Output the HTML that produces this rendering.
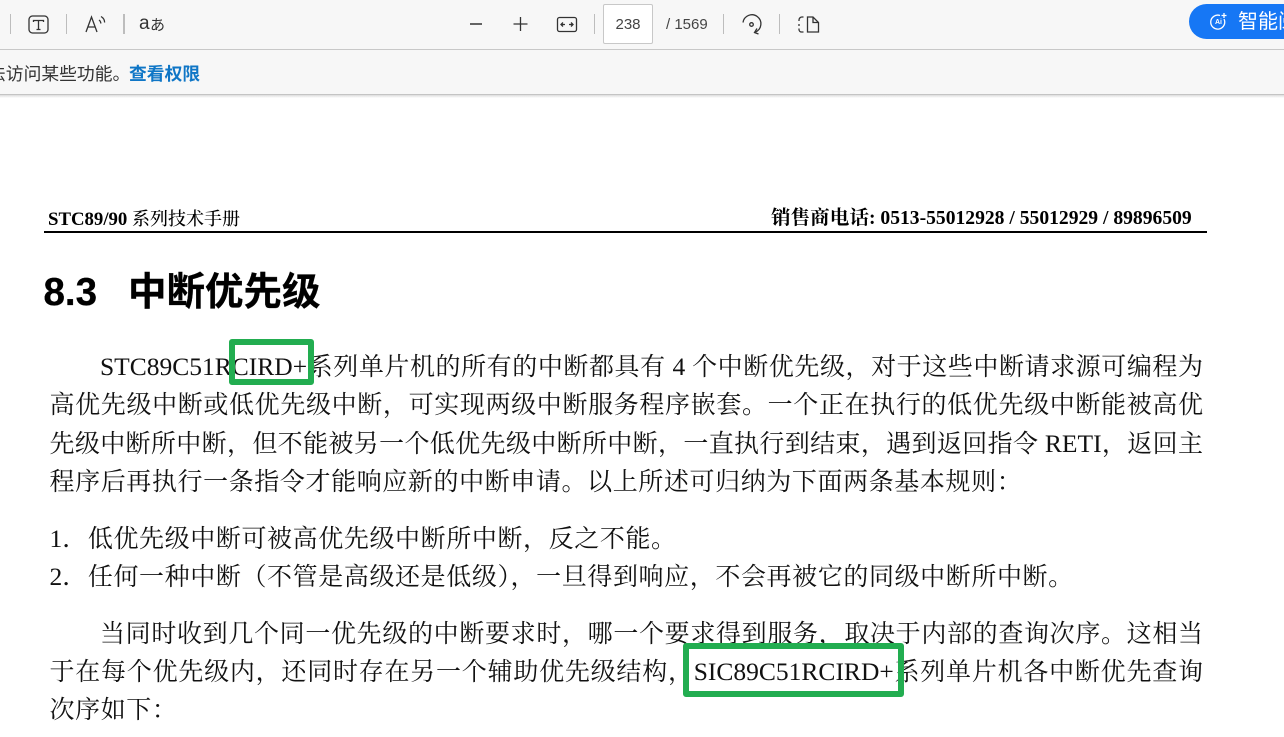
<!DOCTYPE html>
<html lang="zh">
<head>
<meta charset="utf-8">
<style>
html,body{margin:0;padding:0;width:1284px;height:737px;overflow:hidden;background:#fff}
body{position:relative;font-family:"Liberation Serif","Noto Serif CJK SC",serif;color:#000}
div{position:absolute}
#tb{left:0;top:0;width:1284px;height:49px;background:#f7f7f7;border-bottom:1px solid #c8c8c8}
#msg{left:0;top:50px;width:1284px;height:44px;background:#f7f7f7;border-bottom:1px solid #c4c4c4;font:17.8px/49px "Liberation Sans","Noto Sans CJK SC",sans-serif;color:#333;white-space:nowrap}
#sh{left:0;top:95px;width:1284px;height:3px;background:linear-gradient(#dcdcdc,#fff)}
.sep{width:1px;height:20px;top:14px;background:#bdbdbd}
svg{position:absolute;left:0;top:0}
.ui{font-family:"Liberation Sans","Noto Sans CJK SC",sans-serif;color:#444;white-space:nowrap}
.l{left:49.5px;width:1153.5px;height:38px;line-height:38px;font-size:25px;text-align:justify;text-align-last:justify;white-space:nowrap;color:#111}
.n{text-align:left;text-align-last:left;width:auto;letter-spacing:.6px}
.la{font-size:25.5px;letter-spacing:0;line-height:0}
.box{border:6px solid #22ad50;border-radius:3px;box-sizing:border-box}
.h{font:700 38.5px/46px "Liberation Sans","Noto Sans CJK SC",sans-serif;white-space:nowrap;color:#000;-webkit-text-stroke:.3px #000}
</style>
</head>
<body>
<div id="tb"></div>
<div id="msg"><span style="position:absolute;left:-12px">法访问某些功能。</span><span style="position:absolute;left:129px;color:#0f76c6;font-weight:700">查看权限</span></div>
<div id="sh"></div>

<div class="sep" style="left:10px"></div>
<div class="sep" style="left:66px"></div>
<div class="sep" style="left:123px;width:2px"></div>
<div class="sep" style="left:594px"></div>
<div class="sep" style="left:723px"></div>
<div class="sep" style="left:779px"></div>

<svg width="1284" height="50" viewBox="0 0 1284 50" fill="none" stroke="#333" stroke-width="1.3">
  <rect x="29" y="16" width="19" height="17" rx="3.5"/>
  <path d="M33.500 22v-1.500h10V22M38.500 20.500v9M36.500 29.500h4"/>
  <path d="M86 32l5.500-15 5.500 15M88 27h7"/>
  <path d="M99 20c1.200.8 1.800 2 1.800 3.500M101 16.500c2.400 1.400 3.600 3.600 3.600 6"/>
  <path d="M470 24h12" stroke-width="1.5"/>
  <path d="M513.500 24h14M520.500 17v14" stroke-width="1.3"/>
  <rect x="557.500" y="17.500" width="19" height="14" rx="2"/>
  <path d="M561 24.500h4M563 22.500l-2 2 2 2M573 24.500h-4M571 22.500l2 2-2 2"/>
  <path d="M743 22.500a9 9 0 1 1 12.500 9.500"/>
  <path d="M757 28.500l-2.500 4 4 1.500"/>
  <circle cx="751.500" cy="24.500" r="1.800"/>
  <path d="M803.500 17h-1.500a3 3 0 0 0-3 3v1M799 24v2M799 28.500v1a2.500 2.500 0 0 0 2.500 2.500h2"/>
  <path d="M807.500 32V17h5.500l5.500 5.500V32zM813 17v5.500h5.500"/>
</svg>
<div class="ui" style="left:139px;top:12px;font-size:19px;line-height:24px;color:#333">a</div>
<div class="ui" style="left:150px;top:13px;font-size:15px;line-height:24px;color:#333;font-family:'Noto Sans CJK JP',sans-serif">あ</div>

<div style="left:603px;top:4px;width:48px;height:38px;background:#fff;border:1px solid #c8c8c8;border-radius:2px;font:15px/40px 'Liberation Sans',sans-serif;color:#444;text-align:center">238</div>
<div class="ui" style="left:666px;top:16px;font-size:15px;line-height:18px">/ 1569</div>

<div style="left:1189px;top:4px;width:120px;height:35px;border-radius:18px;background:#1677f5"></div>
<svg width="1284" height="50" viewBox="0 0 1284 50" fill="none" stroke="#fff" stroke-width="1.3">
  <path d="M1224 19a7 7 0 1 1-4-3.500"/>
  <path d="M1224 13v5M1221.500 15.500h5"/>
</svg>
<div style="left:1215px;top:18px;font:700 7px/10px 'Liberation Sans',sans-serif;color:#fff">Ai</div>
<div style="left:1238px;top:9px;width:46px;overflow:hidden;white-space:nowrap;font:20px/27px 'Liberation Sans','Noto Sans CJK SC',sans-serif;color:#fff">智能阅读</div>

<div style="left:48px;top:208px;font-weight:700;font-size:18.8px;line-height:22px;white-space:nowrap">STC89/90 <span style="font-weight:500;font-size:18px">系列技术手册</span></div>
<div style="left:771px;top:208px;font-weight:700;font-size:19.6px;line-height:22px;white-space:nowrap">销售商电话: 0513-55012928 / 55012929 / 89896509</div>
<div style="left:44px;top:231px;width:1163px;height:2px;background:#000"></div>

<div class="h" style="left:43.5px;top:270px">8.3</div>
<div class="h" style="left:128px;top:270px">中断优先级</div>

<div class="l" style="left:100px;width:1103px;top:349px"><span class="la">STC89C51RCIRD+</span>系列单片机的所有的中断都具有 <span class="la">4</span> 个中断优先级，对于这些中断请求源可编程为</div>
<div class="l" style="top:387px">高优先级中断或低优先级中断，可实现两级中断服务程序嵌套。一个正在执行的低优先级中断能被高优</div>
<div class="l" style="top:426px">先级中断所中断，但不能被另一个低优先级中断所中断，一直执行到结束，遇到返回指令 <span class="la">RETI</span>，返回主</div>
<div class="l n" style="top:464px">程序后再执行一条指令才能响应新的中断申请。以上所述可归纳为下面两条基本规则：</div>

<div class="l n" style="top:521px"><span class="la">1</span>．低优先级中断可被高优先级中断所中断，反之不能。</div>
<div class="l n" style="top:559px"><span class="la">2</span>．任何一种中断（不管是高级还是低级），一旦得到响应，不会再被它的同级中断所中断。</div>

<div class="l" style="left:100px;width:1103px;top:616px">当同时收到几个同一优先级的中断要求时，哪一个要求得到服务，取决于内部的查询次序。这相当</div>
<div class="l" style="top:654px">于在每个优先级内，还同时存在另一个辅助优先级结构，<span class="la">SIC89C51RCIRD+</span>系列单片机各中断优先查询</div>
<div class="l n" style="top:692px">次序如下：</div>

<div class="box" style="left:229px;top:339px;width:85px;height:46px"></div>
<div class="box" style="left:683px;top:643px;width:221px;height:54px"></div>
</body>
</html>
